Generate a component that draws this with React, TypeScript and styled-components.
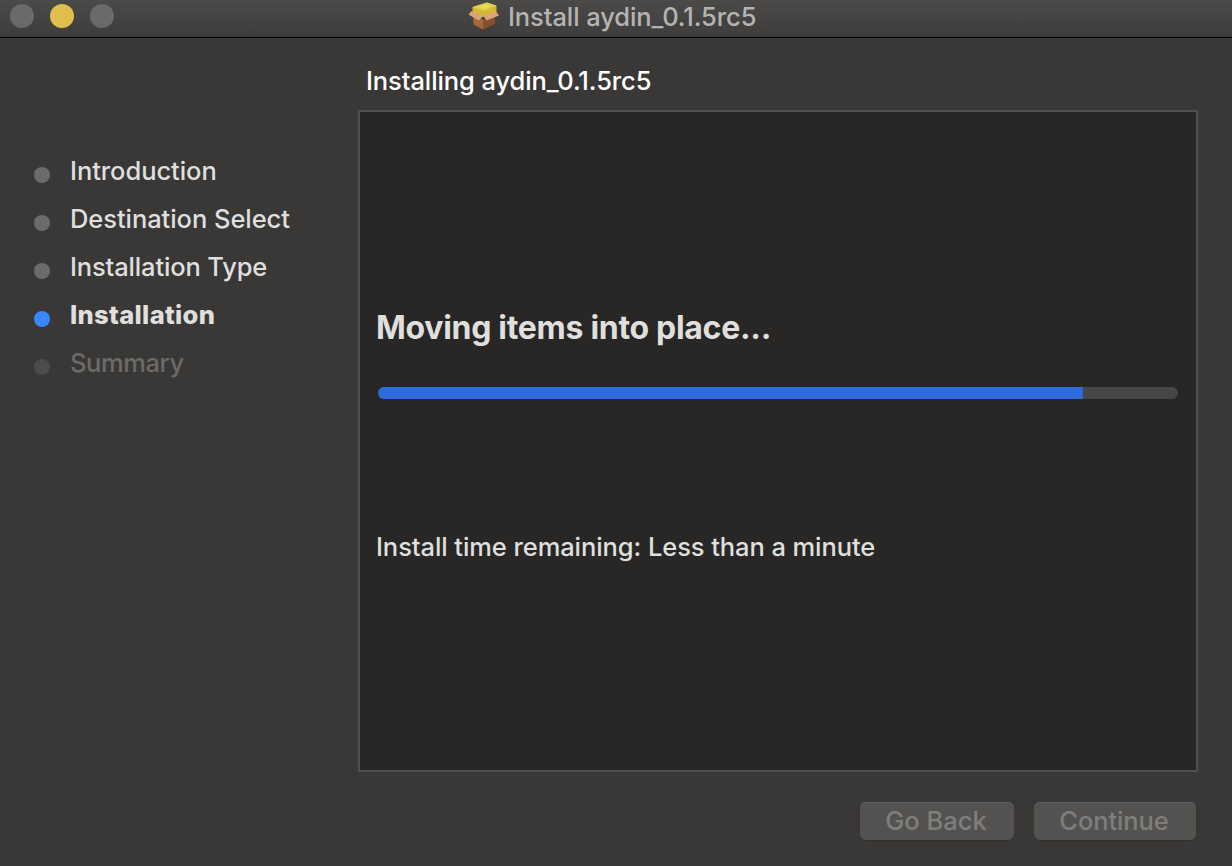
import React from 'react';
import styled, { createGlobalStyle } from 'styled-components';

const GlobalStyle = createGlobalStyle`
  * { box-sizing: border-box; }
  body { margin: 0; background: #3a3836; }
`;

const Window = styled.div`
  width: 1232px;
  height: 866px;
  display: flex;
  flex-direction: column;
  overflow: hidden;
  background: #3a3836;
  color: #dfdfde;
  font-family: Inter, 'Liberation Sans', sans-serif;
  font-size: 25.5px;
  font-weight: 450;
  line-height: 32px;
  white-space: nowrap;
`;

const TitleBar = styled.header`
  height: 38px;
  flex: none;
  display: grid;
  grid-template-columns: 468px 1fr;
  background: linear-gradient(#4b4a48, #3e3d3b);
  border-bottom: 1px solid #000;
`;

const WindowControls = styled.div`
  display: flex;
  gap: 16px;
  padding: 4px 0 0 10px;
`;

const ControlDot = styled.span<{ $color: string }>`
  width: 24px;
  height: 24px;
  border-radius: 50%;
  background: ${(p) => p.$color};
`;

const Title = styled.div`
  display: flex;
  align-items: flex-start;
  gap: 8px;
  line-height: 34px;
  color: #b5b4b3;
`;

const PackageIcon = styled.svg`
  width: 32px;
  height: 32px;
  flex: none;
`;

const Label = styled.span<{ $spacing?: number }>`
  letter-spacing: ${(p) => p.$spacing ?? 0}px;
`;

const Body = styled.div`
  flex: 1;
  display: grid;
  grid-template-columns: 358px 840px;
`;

const Steps = styled.ul`
  list-style: none;
  margin: 0;
  padding: 117px 0 0 34px;
`;

const Step = styled.li<{ $state: 'done' | 'current' | 'pending' }>`
  height: 48px;
  display: flex;
  gap: 20px;
  font-weight: ${(p) => (p.$state === 'current' ? 780 : 450)};
  color: ${(p) => (p.$state === 'pending' ? '#6b6a68' : '#dfdfde')};

  &::before {
    content: '';
    width: 16px;
    height: 16px;
    margin-top: 12px;
    border-radius: 50%;
    background: ${(p) =>
      ({ done: '#6c6b69', current: '#3a87fc', pending: '#4d4c4a' })[p.$state]};
  }
`;

const Main = styled.main`
  display: flex;
  flex-direction: column;
`;

const Heading = styled.h1`
  margin: 0;
  padding: 27px 0 0 8px;
  height: 72px;
  font: inherit;
  color: #fff;
`;

const Panel = styled.section`
  height: 662px;
  padding: 196px 18px 0 16px;
  border: 2px solid #50504e;
  background: #282725;
`;

const Status = styled.h2`
  margin: 0;
  font-size: 32px;
  font-weight: 720;
  line-height: 40px;
`;

const Track = styled.div`
  height: 12px;
  margin: 39px 0 0 2px;
  border-radius: 6px;
  overflow: hidden;
  background: #474545;
`;

const Fill = styled.div`
  height: 100%;
  width: 705px;
  background: #2d6bdf;
  border-right: 1px solid #3c5f9f;
`;

const Remaining = styled.p`
  margin: 132px 0 0;
`;

const Actions = styled.footer`
  display: flex;
  justify-content: flex-end;
  gap: 20px;
  padding: 30px 2px 0 0;
`;

const Button = styled.button<{ $width: number }>`
  width: ${(p) => p.$width}px;
  height: 38px;
  padding: 0 2px 0 0;
  border: 0;
  border-radius: 6px;
  background: #535250;
  box-shadow: inset 0 1px 0 #62615f, 0 1px 1px #32312f;
  color: #7f7e7c;
  font: inherit;
  line-height: 38px;
`;

const steps = [
  { name: 'Introduction', state: 'done', spacing: -0.06 },
  { name: 'Destination Select', state: 'done', spacing: -0.06 },
  { name: 'Installation Type', state: 'done', spacing: -0.15 },
  { name: 'Installation', state: 'current', spacing: 0.32 },
  { name: 'Summary', state: 'pending', spacing: -0.4 },
] as const;

export default function App() {
  return (
    <Window>
      <GlobalStyle />
      <TitleBar>
        <WindowControls>
          <ControlDot $color="#6b6a69" />
          <ControlDot $color="#dfc04e" />
          <ControlDot $color="#6b6a69" />
        </WindowControls>
        <Title>
          <PackageIcon viewBox="0 0 32 32">
            <path d="M5 14 15 19.5V29.5L5.5 24.5Z" fill="#a3693a" />
            <path d="M15 19.5 27 15V24L15 29.5Z" fill="#87502a" />
            <path d="M4.5 7 19 2.5 28.5 6V12L16 17 4.5 12.5Z" fill="#d3b832" />
            <path d="M4.5 7 19 2.5 28.5 5.5 16.5 11Z" fill="#e3cf48" />
            <path d="M9.5 7 18.5 4.5 24 5.8 16 9Z" fill="#e9d95f" />
            <path d="M3.5 11 15.5 16 10.5 20.5 0.5 14.5Z" fill="#dba478" />
            <path d="M15.5 16 28 11.5 31 15.5 18.5 20.5Z" fill="#d8a67a" />
          </PackageIcon>
          <Label $spacing={-0.09}>Install aydin_0.1.5rc5</Label>
        </Title>
      </TitleBar>
      <Body>
        <Steps>
          {steps.map((s) => (
            <Step key={s.name} $state={s.state}>
              <Label $spacing={s.spacing}>{s.name}</Label>
            </Step>
          ))}
        </Steps>
        <Main>
          <Heading>
            <Label $spacing={-0.1}>Installing aydin_0.1.5rc5</Label>
          </Heading>
          <Panel>
            <Status>
              <Label $spacing={-0.3}>Moving items into place...</Label>
            </Status>
            <Track>
              <Fill />
            </Track>
            <Remaining>
              <Label $spacing={-0.08}>Install time remaining: Less than a minute</Label>
            </Remaining>
          </Panel>
          <Actions>
            <Button $width={154} disabled>
              <Label>Go Back</Label>
            </Button>
            <Button $width={162} disabled>
              <Label $spacing={-0.1}>Continue</Label>
            </Button>
          </Actions>
        </Main>
      </Body>
    </Window>
  );
}
